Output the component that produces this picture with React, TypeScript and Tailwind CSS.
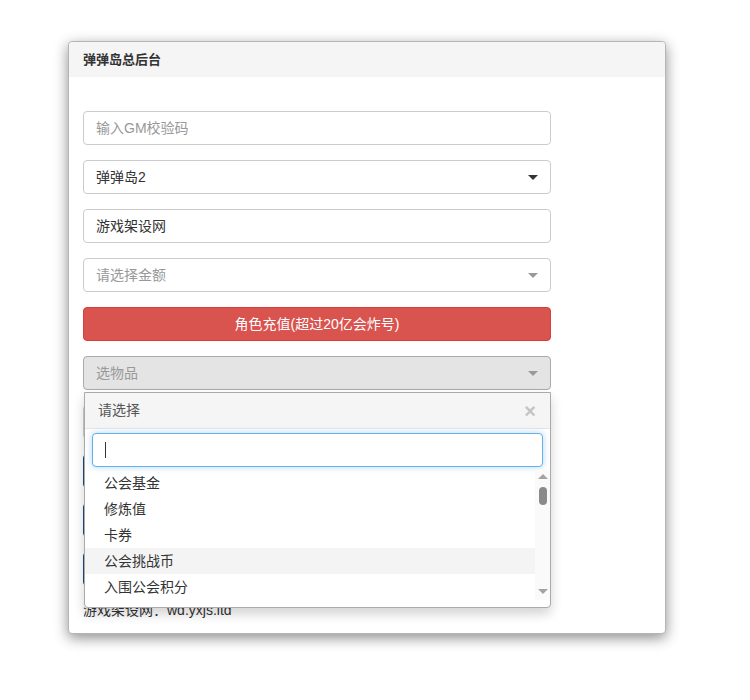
import React from 'react';

const font = { fontFamily: '"Liberation Sans", "Noto Sans CJK SC", sans-serif' };

const items = ['公会基金', '修炼值', '卡券', '公会挑战币', '入围公会积分'];

function Caret({ dark }: { dark?: boolean }) {
  return (
    <span
      className={`h-0 w-0 border-x-[5px] border-t-[5px] border-x-transparent ${
        dark ? 'border-t-[#333]' : 'border-t-[#999]'
      }`}
    />
  );
}

function SelectBox({ text, placeholder, dark }: { text: string; placeholder?: boolean; dark?: boolean }) {
  return (
    <div className="flex h-[34px] items-center justify-between rounded-[4px] border border-[#ccc] bg-white pl-3 pr-[12px]">
      <span className={placeholder ? 'text-[#999]' : 'text-[#333]'}>{text}</span>
      <Caret dark={dark} />
    </div>
  );
}

function Scrollbar() {
  return (
    <div className="flex w-[15px] flex-col items-center bg-[#fafafa] pt-[4px]">
      <span className="h-0 w-0 border-x-[5px] border-b-[5px] border-x-transparent border-b-[#a3a3a3]" />
      <span className="mt-[8px] h-[18px] w-[8px] rounded-full bg-[#8a8a8a]" />
      <span className="flex-1" />
      <span className="mb-[6px] h-0 w-0 border-x-[5px] border-t-[5px] border-x-transparent border-t-[#a3a3a3]" />
    </div>
  );
}

function ItemPicker() {
  return (
    <div className="relative">
      <div className="flex h-[34px] items-center justify-between rounded-[4px] border border-[#aaa] bg-[#e4e4e4] pl-3 pr-[12px]">
        <span className="text-[#999]">选物品</span>
        <Caret />
      </div>
      {/* open dropdown */}
      <div className="absolute left-[1px] top-[36px] z-10 w-[467px] rounded-b-[4px] border border-[#aaa] bg-white pb-[7px] shadow-[0_6px_12px_rgba(0,0,0,0.175)]">
        <div className="flex h-[36px] items-center justify-between border-b border-[#e5e5e5] bg-[#f5f5f5] pl-[13px] pr-[14px]">
          <span className="text-[#555]">请选择</span>
          <span className="text-[20px] font-bold leading-none text-[#c4c4c4]">×</span>
        </div>
        <div className="px-[7px] pt-[4px]">
          <div className="flex h-[34px] items-center rounded-[4px] border border-[#66afe9] bg-white pl-[12px] shadow-[0_0_6px_rgba(102,175,233,0.5)]">
            <span className="h-[16px] w-px bg-[#333]" />
          </div>
        </div>
        <div className="mt-[3px] flex h-[130px] overflow-hidden">
          <ul className="flex-1">
            {items.map((it) => (
              <li
                key={it}
                className={`flex h-[26px] items-center pl-[19px] text-[#333] ${
                  it === '公会挑战币' ? 'bg-[#f4f4f4]' : ''
                }`}
              >
                {it}
              </li>
            ))}
          </ul>
          <Scrollbar />
        </div>
      </div>
    </div>
  );
}

export default function App() {
  return (
    <div className="min-h-[700px] bg-white pt-[41px] text-[14px]" style={font}>
      <div className="ml-[68px] h-[593px] w-[598px] rounded-[4px] border border-[#b5b5b5] bg-white shadow-[0_4px_14px_rgba(0,0,0,0.45)]">
        <div className="flex h-[35px] items-center rounded-t-[4px] bg-[#f5f5f5] px-[14px] text-[13px] font-bold text-[#333]">
          弹弹岛总后台
        </div>
        <div className="px-[14px] pt-[34px]">
          <div className="flex w-[468px] flex-col gap-[15px]">
            <div className="flex h-[34px] items-center rounded-[4px] border border-[#ccc] px-3 text-[#999]">
              输入GM校验码
            </div>
            <SelectBox text="弹弹岛2" dark />
            <div className="flex h-[34px] items-center rounded-[4px] border border-[#ccc] px-3 text-[#333]">
              游戏架设网
            </div>
            <SelectBox text="请选择金额" placeholder />
            <button className="h-[34px] rounded-[4px] border border-[#d43f3a] bg-[#d9534f] text-white">
              角色充值(超过20亿会炸号)
            </button>
            <ItemPicker />
            <div className="h-[34px] rounded-[4px] border border-[#ccc]" />
            <div className="h-[34px] rounded-[4px] border border-[#204d74] bg-[#286090]" />
            <div className="h-[34px] rounded-[4px] border border-[#204d74] bg-[#286090]" />
            <div className="h-[34px] rounded-[4px] border border-[#204d74] bg-[#286090]" />
          </div>
          <div className="mt-[14px] text-[#333]">游戏架设网：wd.yxjs.ltd</div>
        </div>
      </div>
    </div>
  );
}
